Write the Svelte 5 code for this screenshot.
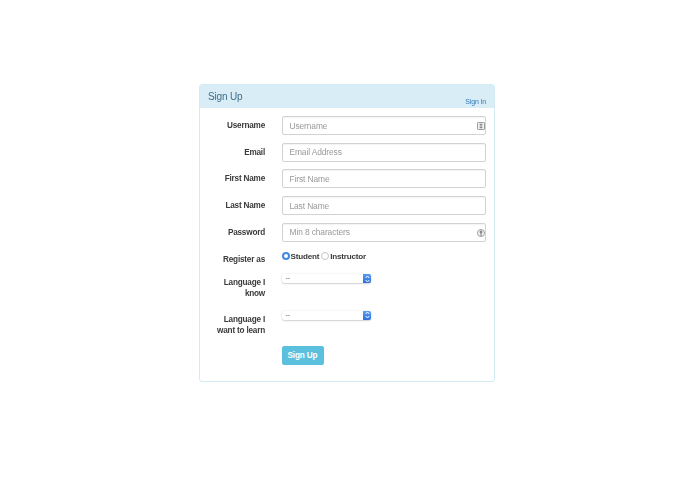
<script>
    let fields = [
        { label: "Username", placeholder: "Username", icon: "card" },
        { label: "Email", placeholder: "Email Address" },
        { label: "First Name", placeholder: "First Name" },
        { label: "Last Name", placeholder: "Last Name" },
        { label: "Password", placeholder: "Min 8 characters", icon: "key" },
    ];

    let languages = ["Language I know", "Language I want to learn"];
    let role = "student";
</script>

<div class="panel">
    <div class="panel-heading">
        <span class="panel-title">Sign Up</span>
        <a class="signin" href="#signin">Sign In</a>
    </div>

    <form class="panel-body">
        {#each fields as field}
            <div class="row">
                <label class="label" for={field.label}>{field.label}</label>
                <div class="control">
                    <input id={field.label} class="input" type="text" placeholder={field.placeholder} />
                    {#if field.icon === "card"}
                        <svg class="autofill" width="8" height="8" viewBox="0 0 9 9">
                            <rect x="0.5" y="0.5" width="8" height="8" rx="1" fill="#f2f2f2" stroke="#888" />
                            <rect x="3" y="2" width="3" height="2" fill="#888" />
                            <rect x="3" y="5" width="3" height="2" fill="#888" />
                        </svg>
                    {:else if field.icon === "key"}
                        <svg class="autofill" width="8" height="8" viewBox="0 0 9 9">
                            <circle cx="4.5" cy="4.5" r="4" fill="#f2f2f2" stroke="#999" />
                            <circle cx="4.5" cy="3.4" r="1.6" fill="#888" />
                            <rect x="3.9" y="4" width="1.2" height="4" fill="#888" />
                        </svg>
                    {/if}
                </div>
            </div>
        {/each}

        <div class="row role-row">
            <span class="label role-label">Register as</span>
            <div class="radios">
                <label class="radio">
                    <input type="radio" bind:group={role} value="student" />
                    <span class="dot" class:on={role === "student"}></span>
                    Student
                </label>
                <label class="radio">
                    <input type="radio" bind:group={role} value="instructor" />
                    <span class="dot" class:on={role === "instructor"}></span>
                    Instructor
                </label>
            </div>
        </div>

        {#each languages as lang}
            <div class="row lang-row">
                <span class="label lang-label">{lang}</span>
                <div class="select">
                    <span class="select-value">--</span>
                    <span class="select-arrows">
                        <svg width="5" height="8" viewBox="0 0 5 8">
                            <path d="M0.7 3 L2.5 1 L4.3 3 M0.7 5 L2.5 7 L4.3 5" fill="none" stroke="#fff" stroke-width="1" />
                        </svg>
                    </span>
                </div>
            </div>
        {/each}

        <div class="row submit-row">
            <span class="label"></span>
            <button class="submit" type="button">Sign Up</button>
        </div>
    </form>
</div>

<style>
    :global(body) {
        background: #fff;
        font-family: "Liberation Sans", Arial, sans-serif;
        color: #333;
    }

    .panel {
        width: 294px;
        margin: 84px 0 0 199px;
        border: 1px solid #d3ecf3;
        border-radius: 3px;
        font-family: "Liberation Sans", Arial, sans-serif;
        filter: blur(0.3px);
    }

    .panel-heading {
        display: flex;
        justify-content: space-between;
        height: 23px;
        padding: 0 8px;
        background: #d9edf7;
        border-radius: 2px 2px 0 0;
    }

    .panel-title {
        font-size: 10px;
        letter-spacing: -0.15px;
        line-height: 23px;
        color: #3d6f88;
    }

    .signin {
        margin-top: 12px;
        font-size: 7px;
        letter-spacing: -0.15px;
        line-height: 10px;
        color: #337ab7;
        text-decoration: none;
    }

    .panel-body {
        padding: 8px 8px 16px 0;
    }

    .row {
        display: flex;
        gap: 16.5px;
        height: 19px;
    }

    .row + .row {
        margin-top: 7.7px;
    }

    .label {
        flex: none;
        box-sizing: border-box;
        width: 65px;
        text-align: right;
        font-size: 8.2px;
        letter-spacing: -0.2px;
        font-weight: 700;
        line-height: 20px;
        color: #3a3a3a;
    }

    .control {
        position: relative;
        flex: 1;
    }

    .input {
        display: block;
        box-sizing: border-box;
        width: 100%;
        height: 19px;
        padding: 0 7px;
        border: 1px solid #d2d2d2;
        border-radius: 2px;
        outline: none;
        font-family: inherit;
        font-size: 8.4px;
        letter-spacing: -0.1px;
        color: #555;
        box-shadow: inset 0 1px 1px rgba(0, 0, 0, 0.05);
    }

    .input::placeholder {
        color: #999;
        opacity: 1;
    }

    .autofill {
        position: absolute;
        top: 6px;
        right: 1px;
    }

    .role-row {
        height: 17px;
    }

    .role-label {
        padding-top: 1px;
    }

    .radios {
        display: flex;
        gap: 2px;
        margin-top: -1px;
    }

    .radio {
        display: flex;
        align-items: center;
        gap: 1px;
        height: 16px;
        font-size: 8.1px;
        letter-spacing: -0.2px;
        font-weight: 700;
        color: #3a3a3a;
    }

    .radio input {
        display: none;
    }

    .dot {
        box-sizing: border-box;
        width: 8px;
        height: 8px;
        border: 1px solid #c4c4c4;
        border-radius: 50%;
        background: #fff;
    }

    .dot.on {
        border: 2.5px solid #3f8ae6;
        background: #fff;
    }

    .lang-row {
        height: 29px;
    }

    .lang-label {
        padding: 3px 0 0 10px;
        line-height: 11px;
    }

    .select {
        display: flex;
        justify-content: space-between;
        box-sizing: border-box;
        width: 89.5px;
        height: 9px;
        border-radius: 2px;
        background: #fff;
        box-shadow: 0 0.5px 1.5px rgba(0, 0, 0, 0.3);
        overflow: hidden;
    }

    .select-value {
        padding-left: 4px;
        font-size: 7px;
        line-height: 8px;
        color: #555;
    }

    .select-arrows {
        display: flex;
        align-items: center;
        justify-content: center;
        width: 8px;
        background: linear-gradient(#5a9cf0, #2a6fe0);
    }

    .submit-row {
        margin-top: 6px !important;
    }

    .submit {
        width: 42px;
        height: 19px;
        padding: 0;
        border: 1px solid #5bc0de;
        border-radius: 2px;
        background: #5bc0de;
        font-family: inherit;
        font-size: 8.2px;
        letter-spacing: -0.15px;
        font-weight: 600;
        color: #fff;
    }
</style>
